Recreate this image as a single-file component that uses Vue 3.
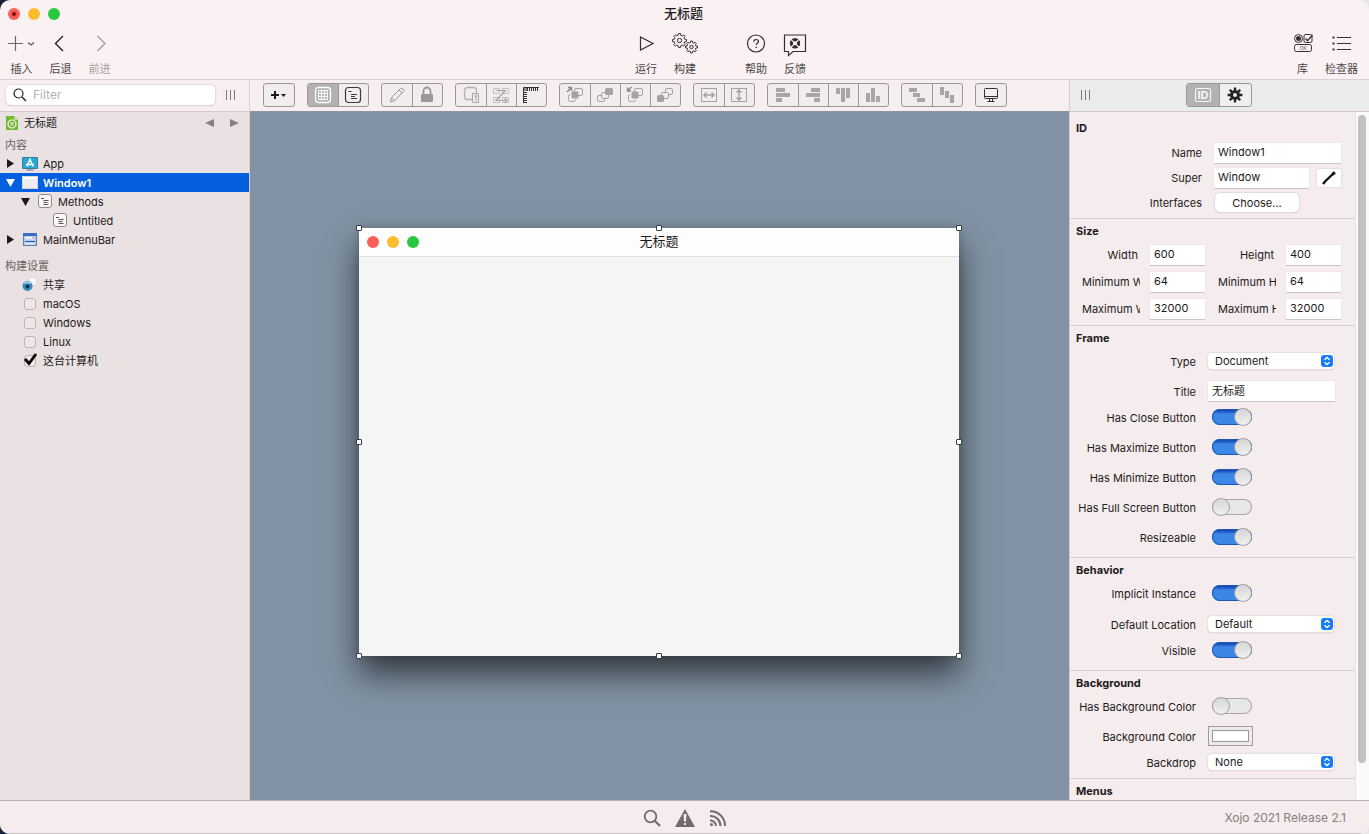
<script setup>
import { ref } from 'vue'

const icons = {
  plus: '<path d="M0 8.500h15M7.500 1v15" stroke="#6d6769" stroke-width="1.200"/><path d="M20 7.500l3 2.500 3-2.500" stroke="#5a5557" stroke-width="1.200"/>',
  back: '<path d="M16 1L8.500 8.500L16 16" stroke="#221e1f" stroke-width="1.400"/>',
  forward: '<path d="M11.500 1L19 8.500L11.500 16" stroke="#9d9798" stroke-width="1.200"/>',
  run: '<path d="M8.500 2v13l12.500-6.500z" stroke="#332f30" stroke-width="1.200"/>',
  help: '<circle cx="14" cy="8.500" r="8.500" stroke="#332f30" stroke-width="1.200"/><path d="M11.800 6.800c0-3.200 4.700-2.900 4.700-.2 0 1.600-2.300 1.700-2.300 3.500" stroke="#332f30" stroke-width="1.200"/><circle cx="14.200" cy="12.300" r=".8" fill="#332f30"/>',
  feedback: '<path d="M3.500 0h21v16.500H12l-4.500 4v-4h-4z" stroke="#332f30" stroke-width="1.200"/><circle cx="14" cy="8.300" r="3.600" stroke="#332f30" stroke-width="3.200"/><path d="M9.500 3.800l9 9m0-9l-9 9" stroke="#faf1f2" stroke-width="1.200"/><circle cx="14" cy="8.300" r="1.500" fill="#faf1f2"/>',
  library: '<circle cx="9.500" cy="3.500" r="4" stroke="#332f30" stroke-width="1"/><circle cx="9.500" cy="3.500" r="2.500" fill="#332f30"/><rect x="15" y="-.5" width="8" height="8" rx="1.500" stroke="#332f30"/><path d="M16.500 3.500l2 2.200L23.500 0" stroke="#332f30" stroke-width="1.300"/><rect x="5.500" y="9.500" width="17" height="7" rx="2" stroke="#332f30"/><text x="14" y="15" font-size="5" text-anchor="middle" fill="#555">OK</text>',
  list: '<path d="M9 2.500h14M9 8.500h14M9 14.500h14" stroke="#332f30" stroke-width="1.200"/><path d="M4.500 2.500h2M4.500 8.500h2M4.500 14.500h2" stroke="#332f30" stroke-width="2"/>',

  add: '<path d="M2 10h8M6 6v8" stroke="#1c1a1a" stroke-width="2"/><path d="M12 9h5l-2.500 3z" fill="#1c1a1a"/>',
  grid: '<rect x="2.500" y="2.500" width="15" height="15" rx="3" stroke="#fff" stroke-width="1.300"/><path d="M5.500 5.500h9v9h-9zM5.500 8.500h9M5.500 11.500h9M8.500 5.500v9M11.500 5.500v9" stroke="#fff"/>',
  code: '<rect x="2.500" y="2.500" width="15" height="15" rx="3" stroke="#3b3939" stroke-width="1.200"/><path d="M5.500 6.500h3M8 9.500h6M8 11.500h4M8 13.500h6" stroke="#3b3939"/>',
  pencil: '<path d="M3.500 17l1-4.500L13.500 3.500q1-1 2.500.5t.5 2.500L7.500 15.800zM4.500 12.500l3 3.300M12 5l3 3" stroke="#9b9797"/>',
  lock: '<rect x="4" y="9" width="12" height="8" rx="1" fill="#9b9797"/><path d="M6.500 9V6a3.500 3.500 0 0 1 7 0v3" stroke="#9b9797" stroke-width="1.800"/>',
  order: '<rect x="3.500" y="2.500" width="12" height="12" rx="3" stroke="#b5b1b1" stroke-width="1.300"/><path d="M11.500 8.500h6v9h-6z" fill="#f2eded" stroke="#aaa5a5"/><text x="14.500" y="15.500" font-size="7" font-weight="700" text-anchor="middle" fill="#aaa5a5">1</text>',
  tab: '<path d="M2.500 3.500h6v5h-6zM11.500 3.500h6v5h-6zM2.500 12.500h6v5h-6zM11.500 12.500h6v5h-6z" stroke="#c5c1c1"/><path d="M4.500 5.500h10L5 15.500h11M13.500 13l2.500 2.500-2.500 2.500" stroke="#aaa5a5" stroke-width="1.200"/>',
  ruler: '<path d="M2.500 18V2.500H18M3 7.500h3M3 9.500h3M3 11.500h3M3 13.500h3M3 15.500h3M3 17.500h3M6.500 3v3M8.500 3v3M10.500 3v3M12.500 3v3M14.500 3v3M16.500 3v3" stroke="#343131"/><path d="M3 3h3v3H3z" fill="#8b8787"/>',
  front: '<rect x="9.500" y="3.500" width="8" height="7" rx="1.500" stroke="#a7a2a2"/><rect x="6.500" y="6.500" width="7" height="7" rx="1" fill="#a7a2a2"/><path d="M5 9.500q-1.500 0-1.500 2v3q0 2 2 2h3q2 0 2-2" stroke="#a7a2a2"/><path d="M2 7L6 3M3 2.500h3.500V6" stroke="#8b8787" stroke-width="1.500"/>',
  forwardOne: '<rect x="2.500" y="10.500" width="7" height="6" rx="1.500" stroke="#a7a2a2"/><rect x="6.500" y="7.500" width="7" height="6" rx="1.500" fill="#f2eded" stroke="#a7a2a2"/><rect x="10" y="3" width="8" height="7" rx="1.500" fill="#a7a2a2"/>',
  backOne: '<rect x="9.500" y="3.500" width="8" height="7" rx="1.500" stroke="#a7a2a2"/><rect x="6.500" y="6.500" width="7" height="7" rx="1" fill="#a7a2a2"/><path d="M5 9.500q-1.500 0-1.500 2v3q0 2 2 2h3q2 0 2-2" stroke="#a7a2a2"/><path d="M6.500 2L3 5.500M2.500 2.500V6H6" stroke="#8b8787" stroke-width="1.500"/>',
  backAll: '<rect x="10.500" y="3.500" width="7" height="6" rx="1.500" stroke="#a7a2a2"/><rect x="6.500" y="7.500" width="7" height="6" rx="1.500" fill="#f2eded" stroke="#a7a2a2"/><rect x="2" y="10" width="7" height="7" rx="1.500" fill="#a7a2a2"/>',
  fillW: '<rect x="2.500" y="3.500" width="15" height="13" stroke="#a7a2a2"/><path d="M5 10h10M7.500 7.500L5 10l2.500 2.500M12.500 7.500L15 10l-2.500 2.500" stroke="#a7a2a2" stroke-width="1.500"/>',
  fillH: '<rect x="2.500" y="3.500" width="15" height="13" stroke="#a7a2a2"/><path d="M10 5v10M7.500 7.500L10 5l2.500 2.500M7.500 12.500L10 15l2.500-2.500" stroke="#a7a2a2" stroke-width="1.500"/>',
  alignL: '<path d="M3 3h9v4H3zM3 8h14v4H3zM3 13h6v4H3z" fill="#aaa5a5"/>',
  alignR: '<path d="M8 3h9v4H8zM3 8h14v4H3zM11 13h6v4h-6z" fill="#aaa5a5"/>',
  alignT: '<path d="M3 3h4v6H3zM8 3h4v14H8zM13 3h4v10h-4z" fill="#aaa5a5"/>',
  alignB: '<path d="M3 8h4v9H3zM8 3h4v14H8zM13 11h4v6h-4z" fill="#aaa5a5"/>',
  spaceH: '<path d="M2 3h8v4H2zM6 8h7v4H6zM10 13h8v4h-8z" fill="#aaa5a5"/>',
  spaceV: '<path d="M3 2h4v8H3zM8 6h4v7H8zM13 10h4v8h-4z" fill="#aaa5a5"/>',
  monitor: '<rect x="3.500" y="3.500" width="13" height="10" rx="1" stroke="#332f30"/><path d="M4 11.500h12M8.500 13.500v3h3v-3M6.500 16.500h7" stroke="#332f30"/>',

  app: '<rect x="0" y="1" width="16" height="12" rx="1" fill="#3a7f99"/><rect x="1" y="2" width="14" height="10" fill="#27a9d4"/><path d="M5 13h6l1 2H4z" fill="#a7a6aa"/><path d="M5 10.500l3-7 3 7M4 8.500h8" stroke="#fff" stroke-width="1.500"/>',
  window: '<rect x=".5" y="1.500" width="15" height="12" fill="#ededf0" stroke="#d8d8dc"/><path d="M1 2h14v2H1z" fill="#fff"/>',
  method: '<rect x="1.500" y=".5" width="13" height="13" rx="2.500" fill="#f7f5f5" stroke="#908a8b"/><path d="M4 4.500h3M6.500 6.500h5M6.500 8.500h4M6.500 10.500h5" stroke="#555"/>',
  menu: '<rect x="1.500" y="1.500" width="13" height="12" fill="#b8c8df" stroke="#5d7faf"/><path d="M1 1h14v3H1z" fill="#3c6dc0"/><path d="M3 5h7v1.500H3z" fill="#fff"/><path d="M3 7.500h10v5H3z" fill="#dfe8f3"/><path d="M3 9.500h10" stroke="#2f62ba" stroke-width="1.500"/>',
  shared: '<circle cx="10.500" cy="4.500" r="4.500" fill="#f5f6f6" stroke="#c8c5c5" stroke-width=".6"/><circle cx="5.500" cy="9" r="5" fill="#348dbd"/><path d="M2.500 6.500a4.500 4 0 0 1 6 0" stroke="#b8e0ee" stroke-width="1.500"/><circle cx="5.500" cy="9.500" r="2" fill="#082b50"/>',
  project: '<path d="M0 1h8l4 4v10H0z" fill="#75b733"/><path d="M8 1l4 4H8z" fill="#b7df83"/><circle cx="6" cy="9" r="4" stroke="#f4fae9" stroke-width="1.200"/><path d="M4.500 7.500l3 3m0-3l-3 3" stroke="#f4fae9" stroke-width="1.200"/>',
}

function gear(cx, cy, teeth, outer, inner) {
  const pts = []
  const step = (Math.PI * 2) / teeth
  for (let i = 0; i < teeth; i++) {
    for (const [o, r] of [[-0.3, inner], [-0.2, outer], [0.2, outer], [0.3, inner]]) {
      const a = (i + o) * step
      pts.push(`${(cx + r * Math.cos(a)).toFixed(2)},${(cy + r * Math.sin(a)).toFixed(2)}`)
    }
  }
  return pts.join(' ')
}
icons.build = `<g stroke="#332f30" stroke-linejoin="round"><polygon points="${gear(8.5, 5.5, 8, 7, 5.4)}"/><circle cx="8.500" cy="5.500" r="2.200"/><polygon points="${gear(20.5, 12, 8, 6, 4.5)}"/><circle cx="20.500" cy="12" r="1.700"/></g>`
icons.settings = `<polygon points="${gear(10, 10, 8, 7.5, 5)}" fill="#242222"/><circle cx="10" cy="10" r="2" fill="#ededed"/>`

const leftTools = [
  { label: '插入', icon: 'plus' },
  { label: '后退', icon: 'back' },
  { label: '前进', icon: 'forward', off: true },
]
const centerTools = [
  [{ label: '运行', icon: 'run' }, { label: '构建', icon: 'build' }],
  [{ label: '帮助', icon: 'help' }, { label: '反馈', icon: 'feedback' }],
]
const rightTools = [{ label: '库', icon: 'library' }, { label: '检查器', icon: 'list' }]

const groups = [
  ['add'], ['grid', 'code'], ['pencil', 'lock'], ['order', 'tab', 'ruler'],
  ['front', 'forwardOne', 'backOne', 'backAll'], ['fillW', 'fillH'],
  ['alignL', 'alignR', 'alignT', 'alignB'], ['spaceH', 'spaceV'], ['monitor'],
]

const contents = [
  { name: 'App', icon: 'app', arrow: 'right', depth: 0 },
  { name: 'Window1', icon: 'window', arrow: 'down', depth: 0, selected: true },
  { name: 'Methods', icon: 'method', arrow: 'down', depth: 1 },
  { name: 'Untitled', icon: 'method', arrow: '', depth: 2 },
  { name: 'MainMenuBar', icon: 'menu', arrow: 'right', depth: 0 },
]
const targets = ref([
  { name: 'macOS', on: false },
  { name: 'Windows', on: false },
  { name: 'Linux', on: false },
  { name: '这台计算机', on: true },
])

const sizes = ref([
  { id: 'width', label: 'Width', value: '600' },
  { id: 'height', label: 'Height', value: '400' },
  { id: 'min-w', label: 'Minimum Width', value: '64' },
  { id: 'min-h', label: 'Minimum Height', value: '64' },
  { id: 'max-w', label: 'Maximum Width', value: '32000' },
  { id: 'max-h', label: 'Maximum Height', value: '32000' },
])

const sections = ref([
  {
    title: 'Frame', pad: 'pad-l',
    rows: [
      { id: 'type', label: 'Type', kind: 'select', value: 'Document', gap: '' },
      { id: 'title', label: 'Title', kind: 'text', value: '无标题', gap: 'loose' },
      { id: 'close', label: 'Has Close Button', kind: 'switch', value: true, gap: 'tight' },
      { id: 'max', label: 'Has Maximize Button', kind: 'switch', value: true, gap: 'loose' },
      { id: 'min', label: 'Has Minimize Button', kind: 'switch', value: true, gap: 'loose' },
      { id: 'full', label: 'Has Full Screen Button', kind: 'switch', value: false, gap: 'loose' },
      { id: 'resize', label: 'Resizeable', kind: 'switch', value: true, gap: 'loose' },
    ],
  },
  {
    title: 'Behavior', pad: 'pad-l',
    rows: [
      { id: 'implicit', label: 'Implicit Instance', kind: 'switch', value: true, gap: '' },
      { id: 'location', label: 'Default Location', kind: 'select', value: 'Default', gap: 'wide' },
      { id: 'visible', label: 'Visible', kind: 'switch', value: true, gap: 'tight' },
    ],
  },
  {
    title: 'Background', pad: 'pad-s',
    rows: [
      { id: 'has-bg', label: 'Has Background Color', kind: 'switch', value: false, gap: '' },
      { id: 'bg', label: 'Background Color', kind: 'color', value: '#ffffff', gap: 'loose' },
      { id: 'backdrop', label: 'Backdrop', kind: 'select', value: 'None', gap: 'tight' },
    ],
  },
])

const name = ref('Window1')
const superName = ref('Window')
const filter = ref('')
const handles = ['nw', 'n', 'ne', 'w', 'e', 'sw', 's', 'se']
</script>

<template>
  <div class="shell">
    <header class="header">
      <div class="titlebar">
        <div class="lights"><i class="red active"></i><i class="yellow"></i><i class="green"></i></div>
        <h1>无标题</h1>
      </div>
      <div class="tools">
        <div class="toolset left">
          <button v-for="t in leftTools" :key="t.label" class="tool" :class="{ off: t.off }">
            <svg width="28" height="22" viewBox="0 0 28 22" fill="none" v-html="icons[t.icon]"></svg>
            <span>{{ t.label }}</span>
          </button>
        </div>
        <div class="toolset middle">
          <div v-for="(set, i) in centerTools" :key="i" class="toolset">
            <button v-for="t in set" :key="t.label" class="tool">
              <svg width="28" height="22" viewBox="0 0 28 22" fill="none" v-html="icons[t.icon]"></svg>
              <span>{{ t.label }}</span>
            </button>
          </div>
        </div>
        <div class="toolset right">
          <button v-for="t in rightTools" :key="t.label" class="tool">
            <svg width="28" height="22" viewBox="0 0 28 22" fill="none" v-html="icons[t.icon]"></svg>
            <span>{{ t.label }}</span>
          </button>
        </div>
      </div>
    </header>

    <div class="workspace">
      <aside class="navigator">
        <div class="bar filterbar">
          <label class="filter">
            <svg width="14" height="14" viewBox="0 0 14 14" fill="none"><circle cx="5.500" cy="5.500" r="4.500" stroke="#222" stroke-width="1.200" /><path d="M9 9l4 4" stroke="#222" stroke-width="1.400" /></svg>
            <input v-model="filter" type="text" placeholder="Filter" aria-label="Filter" />
          </label>
          <span class="grip"></span>
        </div>
        <div class="project">
          <svg width="13" height="16" viewBox="0 0 13 16" fill="none" v-html="icons.project"></svg>
          <span>无标题</span>
          <button aria-label="Previous"><svg width="9" height="8" viewBox="0 0 9 8"><path d="M9 0v8L0 4z" fill="#858081" /></svg></button>
          <button aria-label="Next"><svg width="9" height="8" viewBox="0 0 9 8"><path d="M0 0v8l9-4z" fill="#858081" /></svg></button>
        </div>
        <h2 class="group-title">内容</h2>
        <ul class="tree">
          <li v-for="n in contents" :key="n.name" :class="['depth-' + n.depth, { selected: n.selected }]">
            <span class="arrow">
              <svg v-if="n.arrow" width="9" height="9" viewBox="0 0 9 9"><path :d="n.arrow === 'down' ? 'M0 1h9L4.500 9z' : 'M1 0v9l7-4.500z'" fill="currentColor" /></svg>
            </span>
            <svg class="node-icon" width="16" height="16" viewBox="0 0 16 16" fill="none" v-html="icons[n.icon]"></svg>
            <span>{{ n.name }}</span>
          </li>
        </ul>
        <h2 class="group-title second">构建设置</h2>
        <ul class="tree">
          <li class="depth-0">
            <span class="arrow"></span>
            <svg class="node-icon" width="16" height="16" viewBox="0 0 16 16" fill="none" v-html="icons.shared"></svg>
            <span>共享</span>
          </li>
          <li v-for="t in targets" :key="t.name" class="depth-0">
            <span class="arrow"></span>
            <label class="target">
              <span class="tick">
                <input v-model="t.on" type="checkbox" />
                <svg v-if="t.on" width="15" height="13" viewBox="0 0 15 13" fill="none"><path d="M2 6l4 4.500L13 1" stroke="#050505" stroke-width="2.800" /></svg>
              </span>
              <span>{{ t.name }}</span>
            </label>
          </li>
        </ul>
      </aside>

      <main class="editor">
        <div class="bar editbar">
          <div v-for="(g, i) in groups" :key="i" class="segments">
            <button v-for="b in g" :key="b" :class="{ pressed: b === 'grid' }" :aria-label="b">
              <svg width="20" height="20" viewBox="0 0 20 20" fill="none" v-html="icons[b]"></svg>
            </button>
          </div>
        </div>
        <div class="canvas">
          <div class="design">
            <div class="design-title">
              <div class="lights"><i class="red"></i><i class="yellow"></i><i class="green"></i></div>
              <span>无标题</span>
            </div>
            <i v-for="h in handles" :key="h" class="handle" :class="h"></i>
          </div>
        </div>
      </main>

      <aside class="inspector">
        <div class="bar tabbar">
          <span class="grip"></span>
          <div class="segments">
            <button class="pressed" aria-label="ID">
              <svg width="20" height="20" viewBox="0 0 20 20" fill="none"><rect x="2.500" y="3.500" width="15" height="13" rx="1.500" stroke="#f5f5f5" stroke-width="1.200" /><text x="10" y="14" font-size="11" font-weight="700" text-anchor="middle" fill="#f5f5f5">ID</text></svg>
            </button>
            <button aria-label="Settings"><svg width="20" height="20" viewBox="0 0 20 20" fill="none" v-html="icons.settings"></svg></button>
          </div>
        </div>
        <div class="panel">
          <form class="props" @submit.prevent>
            <section class="identity">
              <h3>ID</h3>
              <div class="row">
                <label for="p-name">Name</label>
                <input id="p-name" v-model="name" type="text" class="field long" />
              </div>
              <div class="row">
                <label for="p-super">Super</label>
                <input id="p-super" v-model="superName" type="text" class="field short" />
                <button class="edit" aria-label="Edit super">
                  <svg width="14" height="14" viewBox="0 0 14 14" fill="none"><path d="M1 13L3.500 10L12 2" stroke="#111" stroke-width="2.400" /><path d="M10.500 3.500L12.800 1.200" stroke="#111" stroke-width="3" /></svg>
                </button>
              </div>
              <div class="row">
                <label for="p-int">Interfaces</label>
                <button id="p-int" class="choose">Choose...</button>
              </div>
            </section>
            <section class="size">
              <h3>Size</h3>
              <div class="size-grid">
                <div v-for="s in sizes" :key="s.id" class="pair">
                  <label :for="s.id">{{ s.label }}</label>
                  <input :id="s.id" v-model="s.value" type="text" class="field" />
                </div>
              </div>
            </section>
            <section v-for="sec in sections" :key="sec.title" :class="sec.pad">
              <h3>{{ sec.title }}</h3>
              <div v-for="r in sec.rows" :key="r.id" class="row" :class="r.gap">
                <label :for="r.id">{{ r.label }}</label>
                <div v-if="r.kind === 'select'" class="popup">
                  <select :id="r.id" v-model="r.value"><option>{{ r.value }}</option></select>
                  <svg width="12" height="12" viewBox="0 0 12 12" fill="none"><rect width="12" height="12" rx="3" fill="#1a7bf8" /><path d="M3.500 4.800L6 2.500l2.500 2.300M3.500 7.200L6 9.500l2.500-2.300" stroke="#fff" stroke-width="1.300" /></svg>
                </div>
                <input v-else-if="r.kind === 'text'" :id="r.id" v-model="r.value" type="text" class="field long" />
                <input v-else-if="r.kind === 'switch'" :id="r.id" v-model="r.value" type="checkbox" role="switch" class="switch" />
                <input v-else :id="r.id" v-model="r.value" type="color" class="well" />
              </div>
            </section>
            <section><h3>Menus</h3></section>
          </form>
          <div class="scroll"><div class="thumb"></div></div>
        </div>
      </aside>
    </div>

    <footer class="footer">
      <div class="status">
        <button aria-label="Search"><svg width="18" height="18" viewBox="0 0 18 18" fill="none"><circle cx="7.500" cy="7.500" r="5.800" stroke="#6f6a6b" stroke-width="1.800" /><path d="M11.500 11.500L17 17" stroke="#6f6a6b" stroke-width="2.200" /></svg></button>
        <button aria-label="Warnings"><svg width="20" height="18" viewBox="0 0 20 18"><path d="M10 0l10 18H0z" fill="#6f6a6b" /><path d="M8.500 5h3L11 12.500H9zM9 14h2v2H9z" fill="#f5eced" /></svg></button>
        <button aria-label="Feed"><svg width="18" height="18" viewBox="0 0 18 18" fill="none"><path d="M1 2.200a14.500 14.500 0 0 1 15 14.800M1 7a9.800 9.800 0 0 1 10.500 10M1 11.500a5.500 5.500 0 0 1 6 5.500" stroke="#6f6a6b" stroke-width="2" /><circle cx="2.500" cy="15.500" r="1.500" fill="#6f6a6b" /></svg></button>
      </div>
      <span class="version">Xojo 2021 Release 2.1</span>
    </footer>
  </div>
</template>

<style>
body {
  background: linear-gradient(to right, #16233b 40px, #e9e6e7 40px);
}
</style>

<style scoped>
.shell,
.shell * {
  box-sizing: border-box;
}
.shell {
  height: 100vh;
  display: flex;
  flex-direction: column;
  overflow: hidden;
  border-radius: 10px;
  background: #faf1f2;
  color: #1d1a1b;
  font: 11px/16px Inter, "Noto Sans CJK SC", sans-serif;
}
button {
  border: 0;
  padding: 0;
  margin: 0;
  background: none;
  font: inherit;
  color: inherit;
}
input,
select {
  font: inherit;
  color: inherit;
  margin: 0;
}
h1,
h2,
h3,
ul {
  margin: 0;
  padding: 0;
  list-style: none;
}
svg {
  display: block;
  overflow: visible;
  flex: none;
}

.header {
  border-bottom: 1px solid #d9cfd0;
}
.titlebar {
  display: grid;
  grid-template-columns: 1fr auto 1fr;
  align-items: center;
  height: 28px;
}
.titlebar h1 {
  padding: 0 2px 2px 0;
  font-size: 13px;
  font-weight: 500;
}
.lights {
  display: flex;
  gap: 8px;
  padding-left: 8px;
}
.lights i {
  width: 12px;
  height: 12px;
  border-radius: 50%;
}
.red { background: #fc5f57; }
.red.active { background: radial-gradient(circle, #6a0a08 1px, #fc5f57 3px); }
.yellow { background: #fdbc2e; }
.green { background: #28c840; }

.tools {
  display: grid;
  grid-template-columns: 1fr auto 1fr;
  height: 51px;
}
.toolset { display: flex; }
.left { padding-left: 2px; }
.middle {
  gap: 32px;
  padding-left: 72px;
}
.right {
  justify-content: flex-end;
  padding-right: 8px;
}
.tool {
  width: 39px;
  display: flex;
  flex-direction: column;
  align-items: center;
  gap: 4px;
  padding-top: 7px;
  white-space: nowrap;
  color: #4b4647;
}
.tool.off { color: #a59fa0; }

.workspace {
  flex: 1;
  min-height: 0;
  display: flex;
}
.bar {
  height: 32px;
  flex: none;
  display: flex;
  align-items: center;
  padding-bottom: 1px;
  background: #f6eeef;
  border-bottom: 1px solid #d3c9ca;
}
.grip {
  width: 9px;
  height: 10px;
  border: solid #7d7778;
  border-width: 0 1px;
  background: linear-gradient(#7d7778, #7d7778) center / 1px 100% no-repeat;
}

.navigator {
  width: 250px;
  flex: none;
  background: #eae1e2;
  border-right: 1px solid #d8cfd1;
}
.filterbar {
  gap: 11px;
  padding-left: 6px;
}
.filter {
  width: 209px;
  height: 20px;
  display: flex;
  align-items: center;
  gap: 6px;
  padding: 0 7px;
  border-radius: 5px;
  background: #fff;
  box-shadow: 0 0 1px 1px #e5dcdd, 0 1px 1px #bdb5b6;
}
.filter input {
  flex: 1;
  min-width: 0;
  border: 0;
  padding: 0;
  outline: 0;
  background: none;
  font-size: 12px;
}
.filter input::placeholder { color: #b5b3b3; }
.project {
  height: 23px;
  display: flex;
  align-items: center;
  padding: 0 10px 2px 6px;
  gap: 5px;
}
.project span { flex: 1; }
.project button + button { margin-left: 11px; }
.group-title {
  height: 19px;
  padding-left: 5px;
  font-size: 11px;
  font-weight: 400;
  line-height: 21px;
  color: #6b6566;
}
.second { margin-top: 7px; }
.tree li {
  height: 19px;
  display: flex;
  align-items: center;
  padding-left: 6px;
}
.tree .depth-1 { padding-left: 21px; }
.tree .depth-2 { padding-left: 36px; }
.tree .selected {
  background: #0560e0;
  color: #fff;
  font-weight: 600;
}
.arrow { width: 16px; flex: none; }
.node-icon { margin-right: 5px; }
.target {
  display: flex;
  align-items: center;
}
.tick {
  position: relative;
  width: 16px;
  margin-right: 5px;
  display: flex;
  justify-content: center;
}
.tick input {
  appearance: none;
  width: 12px;
  height: 12px;
  border: 1px solid #bcb4b5;
  border-radius: 3px;
  background: #eee7e8;
}
.tick svg {
  position: absolute;
  left: 1px;
  bottom: 1px;
}

.editor {
  flex: 1;
  min-width: 0;
  display: flex;
  flex-direction: column;
}
.editbar {
  gap: 12px;
  padding-left: 13px;
  border-bottom-color: #8c93a3;
}
.segments {
  display: flex;
  height: 24px;
  border: 1px solid #9d9798;
  border-radius: 3px;
  background: #f2eded;
  overflow: hidden;
}
.segments button {
  width: 30px;
  padding-left: 5px;
  display: flex;
  align-items: center;
}
.segments button + button {
  padding-left: 4px;
  border-left: 1px solid #9d9798;
}
.segments .pressed { background: #b4b1b1; }
.canvas {
  flex: 1;
  min-height: 0;
  display: flex;
  align-items: center;
  justify-content: center;
  padding: 0 1px 28px 0;
  background: #8192a4;
  overflow: hidden;
}
.design {
  position: relative;
  width: 600px;
  height: 428px;
  background: #f5f5f5;
  box-shadow: 0 18px 30px rgba(0, 0, 0, 0.6), 0 0 8px rgba(0, 0, 0, 0.2);
}
.design-title {
  display: grid;
  grid-template-columns: 1fr auto 1fr;
  align-items: center;
  height: 29px;
  background: #fdfdfd;
  border-bottom: 1px solid #dedede;
  font-size: 13px;
}
.design-title span { padding-bottom: 2px; }
.handle {
  position: absolute;
  width: 6px;
  height: 6px;
  margin: -3px;
  border: 1px solid #383c42;
  border-radius: 1px;
  background: #fff;
}
.nw { left: 0; top: 0; }
.n { left: 50%; top: 0; }
.ne { left: 100%; top: 0; }
.w { left: 0; top: 50%; }
.e { left: 100%; top: 50%; }
.sw { left: 0; top: 100%; }
.s { left: 50%; top: 100%; }
.se { left: 100%; top: 100%; }

.inspector {
  width: 300px;
  flex: none;
  display: flex;
  flex-direction: column;
  border-left: 1px solid #d5cccd;
}
.tabbar {
  display: grid;
  grid-template-columns: 1fr auto 1fr;
  padding-right: 2px;
  background: #ebebeb;
}
.tabbar .grip { margin-left: 11px; }
.tabbar .segments { background: #f0f0f0; }
.tabbar .segments button {
  width: 32px;
  padding-left: 6px;
}
.tabbar .segments button + button { padding-left: 5px; }
.panel {
  flex: 1;
  min-height: 0;
  display: flex;
}
.props {
  flex: 1;
  min-width: 0;
  overflow: hidden;
  background: #f5eced;
}
.scroll {
  width: 14px;
  padding: 3px 3px 37px 2px;
  background: #fafafa;
  border-left: 1px solid #e8e3e3;
}
.thumb {
  height: 100%;
  border-radius: 4px;
  background: #c2c1c1;
}
section { border-bottom: 1px solid #d9d0d1; }
section h3 {
  height: 23px;
  padding-left: 6px;
  font-size: 11px;
  font-weight: 700;
  line-height: 24px;
}
.row {
  height: 24px;
  display: flex;
  align-items: center;
}
.row label {
  width: 126px;
  margin-right: 12px;
  padding-top: 2px;
  flex: none;
  text-align: right;
  white-space: nowrap;
}
.identity {
  padding: 4px 0 3px;
}
.identity h3 { height: 24px; }
.identity .row { height: 25px; }
.identity .row label {
  width: 132px;
  padding-top: 0;
}
.tight { margin-top: 2px; }
.loose { margin-top: 6px; }
.wide { margin-top: 7px; }
.pad-l { padding-bottom: 8px; }
.pad-s { padding-bottom: 4px; }
.field {
  width: 55px;
  height: 20px;
  border: 0;
  padding: 0 4px 2px;
  outline: 0;
  background: #fff;
  box-shadow: 0 0 1px #d5cdce, 0 1px 0 #c9c1c2;
}
.field.long { width: 127px; }
.field.short { width: 95px; }
.edit {
  width: 24px;
  height: 18px;
  margin-left: 8px;
  display: flex;
  align-items: center;
  justify-content: center;
  border-radius: 2px;
  background: #fff;
  box-shadow: 0 0 1px 1px #e6dedf;
}
.choose {
  width: 84px;
  height: 19px;
  margin-left: 1px;
  border-radius: 5px;
  background: #fff;
  box-shadow: 0 0 1px 1px #e3dbdc, 0 1px 1px #bcb4b5;
}
.size { padding-bottom: 3px; }
.size h3 { height: 22px; }
.size-grid {
  display: grid;
  grid-template-columns: 123px 123px;
  column-gap: 13px;
  padding-left: 12px;
}
.pair {
  height: 27px;
  display: flex;
  align-items: center;
  gap: 10px;
}
.pair label {
  width: 58px;
  padding-right: 2px;
  overflow: hidden;
  text-align: right;
  white-space: nowrap;
}
.popup {
  position: relative;
  width: 126px;
}
.popup select {
  appearance: none;
  display: block;
  width: 100%;
  height: 16px;
  border: 0;
  border-radius: 4px;
  padding: 0 20px 0 7px;
  background: #fff;
  box-shadow: 0 0 1px 1px #e6dedf, 0 1px 1px #bcb4b5;
}
.popup svg {
  position: absolute;
  right: 1px;
  top: 2px;
  pointer-events: none;
}
.switch {
  appearance: none;
  width: 40px;
  height: 16px;
  margin-left: 4px;
  display: flex;
  align-items: center;
  border-radius: 8px;
  background: #e8e7e7;
  box-shadow: inset 0 0 0 1px #aaa5a6;
}
.switch::before {
  content: "";
  width: 16px;
  height: 16px;
  border: 1px solid #a3a1a2;
  border-radius: 50%;
  background: linear-gradient(#d6d6d6, #f0f0f0);
}
.switch:checked {
  justify-content: flex-end;
  background: linear-gradient(#1550b8, #1550b8 2px, #3c86e6 5px);
  box-shadow: inset 0 0 0 1px #1b57b3;
}
.well {
  width: 45px;
  height: 20px;
  padding: 3px;
  border: 1px solid #a09b9c;
  background: #efeaeb;
}
.well::-webkit-color-swatch-wrapper { padding: 0; }
.well::-webkit-color-swatch {
  border: 1px solid #999;
  border-radius: 0;
}

.footer {
  height: 34px;
  flex: none;
  display: grid;
  grid-template-columns: 1fr auto 1fr;
  align-items: center;
  border-top: 1px solid #b9b1b3;
  border-bottom: 1px solid #c5bec0;
  background: #f5eced;
}
.status {
  grid-column: 2;
  display: flex;
  gap: 14px;
  padding-top: 2px;
}
.version {
  padding: 2px 23px 0 0;
  text-align: right;
  font-size: 12px;
  color: #858081;
}
</style>
